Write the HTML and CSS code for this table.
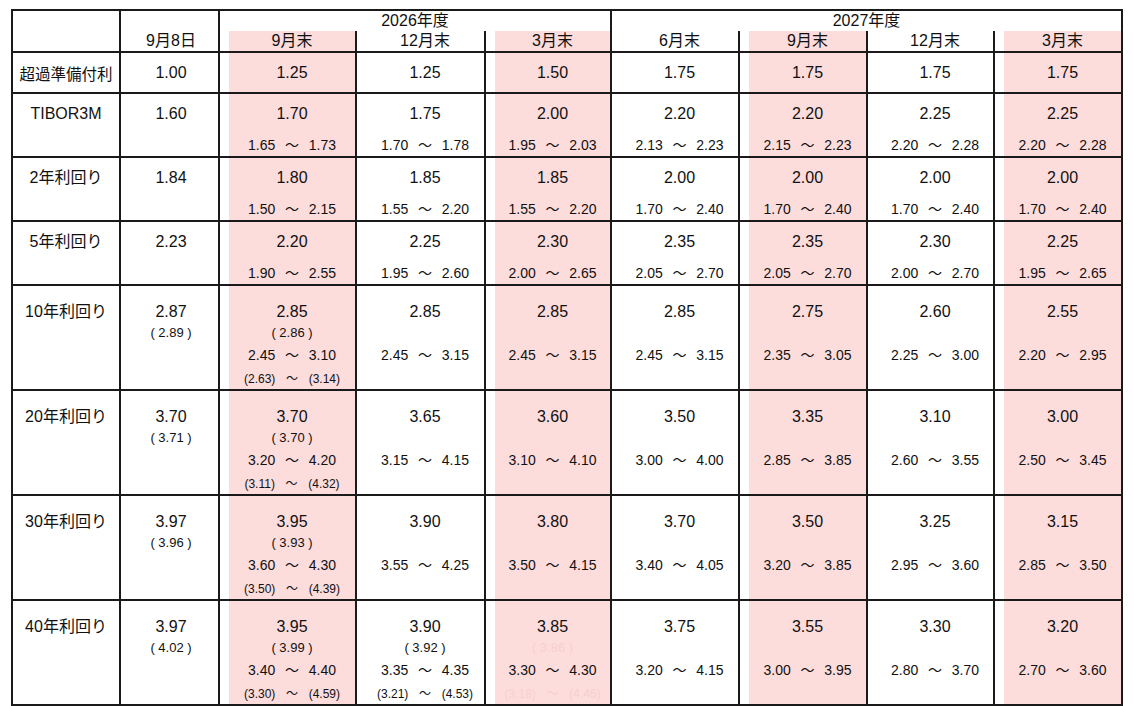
FILE: index.html
```html
<!DOCTYPE html>
<html lang="ja">
<head>
<meta charset="utf-8">
<title>金利見通し</title>
<link rel="stylesheet" href="styles.css">
</head>
<body>
<table class="fx">
  <colgroup>
    <col class="c-lbl"><col class="c-date"><col class="c-w1"><col class="c-w2"><col class="c-w3">
    <col class="c-w4"><col class="c-w4"><col class="c-w5"><col class="c-w4">
  </colgroup>
  <thead>
    <tr class="h1">
      <th rowspan="2" class="lbl"></th>
      <th rowspan="2" class="date">9月8日</th>
      <th colspan="3" class="yr">2026年度</th>
      <th colspan="4" class="yr">2027年度</th>
    </tr>
    <tr class="h2">
      <th class="sub pk">9月末</th>
      <th class="sub">12月末</th>
      <th class="sub pk">3月末</th>
      <th class="sub">6月末</th>
      <th class="sub pk">9月末</th>
      <th class="sub">12月末</th>
      <th class="sub pk">3月末</th>
    </tr>
  </thead>
  <tbody>
    <tr class="r1">
      <td class="lbl">超過準備付利</td>
      <td class="date"><div class="v">1.00</div></td>
      <td class="pk"><div class="v">1.25</div></td>
      <td><div class="v">1.25</div></td>
      <td class="pk"><div class="v">1.50</div></td>
      <td><div class="v">1.75</div></td>
      <td class="pk"><div class="v">1.75</div></td>
      <td><div class="v">1.75</div></td>
      <td class="pk"><div class="v">1.75</div></td>
    </tr>
    <tr class="s">
      <td class="lbl"><div class="v">TIBOR3M</div></td>
      <td class="date"><div class="v">1.60</div></td>
      <td class="pk"><div class="v">1.70</div><div class="r">1.65  ～  1.73</div></td>
      <td><div class="v">1.75</div><div class="r">1.70  ～  1.78</div></td>
      <td class="pk"><div class="v">2.00</div><div class="r">1.95  ～  2.03</div></td>
      <td><div class="v">2.20</div><div class="r">2.13  ～  2.23</div></td>
      <td class="pk"><div class="v">2.20</div><div class="r">2.15  ～  2.23</div></td>
      <td><div class="v">2.25</div><div class="r">2.20  ～  2.28</div></td>
      <td class="pk"><div class="v">2.25</div><div class="r">2.20  ～  2.28</div></td>
    </tr>
    <tr class="s">
      <td class="lbl"><div class="v">2年利回り</div></td>
      <td class="date"><div class="v">1.84</div></td>
      <td class="pk"><div class="v">1.80</div><div class="r">1.50  ～  2.15</div></td>
      <td><div class="v">1.85</div><div class="r">1.55  ～  2.20</div></td>
      <td class="pk"><div class="v">1.85</div><div class="r">1.55  ～  2.20</div></td>
      <td><div class="v">2.00</div><div class="r">1.70  ～  2.40</div></td>
      <td class="pk"><div class="v">2.00</div><div class="r">1.70  ～  2.40</div></td>
      <td><div class="v">2.00</div><div class="r">1.70  ～  2.40</div></td>
      <td class="pk"><div class="v">2.00</div><div class="r">1.70  ～  2.40</div></td>
    </tr>
    <tr class="s">
      <td class="lbl"><div class="v">5年利回り</div></td>
      <td class="date"><div class="v">2.23</div></td>
      <td class="pk"><div class="v">2.20</div><div class="r">1.90  ～  2.55</div></td>
      <td><div class="v">2.25</div><div class="r">1.95  ～  2.60</div></td>
      <td class="pk"><div class="v">2.30</div><div class="r">2.00  ～  2.65</div></td>
      <td><div class="v">2.35</div><div class="r">2.05  ～  2.70</div></td>
      <td class="pk"><div class="v">2.35</div><div class="r">2.05  ～  2.70</div></td>
      <td><div class="v">2.30</div><div class="r">2.00  ～  2.70</div></td>
      <td class="pk"><div class="v">2.25</div><div class="r">1.95  ～  2.65</div></td>
    </tr>
    <tr class="t">
      <td class="lbl"><div class="v">10年利回り</div></td>
      <td class="date"><div class="v">2.87</div><div class="p">( 2.89 )</div></td>
      <td class="pk"><div class="v">2.85</div><div class="p">( 2.86 )</div><div class="r">2.45  ～  3.10</div><div class="pr">(2.63)  ～  (3.14)</div></td>
      <td><div class="v">2.85</div><div class="p"></div><div class="r">2.45  ～  3.15</div></td>
      <td class="pk"><div class="v">2.85</div><div class="p"></div><div class="r">2.45  ～  3.15</div></td>
      <td><div class="v">2.85</div><div class="p"></div><div class="r">2.45  ～  3.15</div></td>
      <td class="pk"><div class="v">2.75</div><div class="p"></div><div class="r">2.35  ～  3.05</div></td>
      <td><div class="v">2.60</div><div class="p"></div><div class="r">2.25  ～  3.00</div></td>
      <td class="pk"><div class="v">2.55</div><div class="p"></div><div class="r">2.20  ～  2.95</div></td>
    </tr>
    <tr class="t">
      <td class="lbl"><div class="v">20年利回り</div></td>
      <td class="date"><div class="v">3.70</div><div class="p">( 3.71 )</div></td>
      <td class="pk"><div class="v">3.70</div><div class="p">( 3.70 )</div><div class="r">3.20  ～  4.20</div><div class="pr">(3.11)  ～  (4.32)</div></td>
      <td><div class="v">3.65</div><div class="p"></div><div class="r">3.15  ～  4.15</div></td>
      <td class="pk"><div class="v">3.60</div><div class="p"></div><div class="r">3.10  ～  4.10</div></td>
      <td><div class="v">3.50</div><div class="p"></div><div class="r">3.00  ～  4.00</div></td>
      <td class="pk"><div class="v">3.35</div><div class="p"></div><div class="r">2.85  ～  3.85</div></td>
      <td><div class="v">3.10</div><div class="p"></div><div class="r">2.60  ～  3.55</div></td>
      <td class="pk"><div class="v">3.00</div><div class="p"></div><div class="r">2.50  ～  3.45</div></td>
    </tr>
    <tr class="t">
      <td class="lbl"><div class="v">30年利回り</div></td>
      <td class="date"><div class="v">3.97</div><div class="p">( 3.96 )</div></td>
      <td class="pk"><div class="v">3.95</div><div class="p">( 3.93 )</div><div class="r">3.60  ～  4.30</div><div class="pr">(3.50)  ～  (4.39)</div></td>
      <td><div class="v">3.90</div><div class="p"></div><div class="r">3.55  ～  4.25</div></td>
      <td class="pk"><div class="v">3.80</div><div class="p"></div><div class="r">3.50  ～  4.15</div></td>
      <td><div class="v">3.70</div><div class="p"></div><div class="r">3.40  ～  4.05</div></td>
      <td class="pk"><div class="v">3.50</div><div class="p"></div><div class="r">3.20  ～  3.85</div></td>
      <td><div class="v">3.25</div><div class="p"></div><div class="r">2.95  ～  3.60</div></td>
      <td class="pk"><div class="v">3.15</div><div class="p"></div><div class="r">2.85  ～  3.50</div></td>
    </tr>
    <tr class="t last">
      <td class="lbl"><div class="v">40年利回り</div></td>
      <td class="date"><div class="v">3.97</div><div class="p">( 4.02 )</div></td>
      <td class="pk"><div class="v">3.95</div><div class="p">( 3.99 )</div><div class="r">3.40  ～  4.40</div><div class="pr">(3.30)  ～  (4.59)</div></td>
      <td><div class="v">3.90</div><div class="p">( 3.92 )</div><div class="r">3.35  ～  4.35</div><div class="pr">(3.21)  ～  (4.53)</div></td>
      <td class="pk"><div class="v">3.85</div><div class="p faint">( 3.86 )</div><div class="r">3.30  ～  4.30</div><div class="pr faint">(3.18)  ～  (4.46)</div></td>
      <td><div class="v">3.75</div><div class="p"></div><div class="r">3.20  ～  4.15</div></td>
      <td class="pk"><div class="v">3.55</div><div class="p"></div><div class="r">3.00  ～  3.95</div></td>
      <td><div class="v">3.30</div><div class="p"></div><div class="r">2.80  ～  3.70</div></td>
      <td class="pk"><div class="v">3.20</div><div class="p"></div><div class="r">2.70  ～  3.60</div></td>
    </tr>
  </tbody>
</table>
</body>
</html>
```

FILE: styles.css
```css
html, body {
  margin: 0;
  padding: 0;
  background: #fff;
}

body {
  font-family: "Liberation Sans", "Noto Sans CJK JP", sans-serif;
  color: #111;
}

.fx {
  border-collapse: collapse;
  table-layout: fixed;
  width: 1110px;
  margin: 9px 0 0 11px;
}

.c-lbl { width: 108px; }
.c-date { width: 99px; }
.c-w1 { width: 137px; }
.c-w2 { width: 129px; }
.c-w3 { width: 126px; }
.c-w4 { width: 128px; }
.c-w5 { width: 127px; }

.fx th,
.fx td {
  border: 2px solid #1a1a1a;
  padding: 0 0 0 9px;
  text-align: center;
  vertical-align: top;
  font-weight: normal;
  white-space: pre;
}

.fx .lbl {
  padding-left: 0;
  font-size: 15.5px;
}

.fx .date {
  padding-left: 3px;
}

/* header */
.h1 { height: 21px; }
.h2 { height: 21px; }

.fx th {
  font-size: 16px;
  line-height: 20px;
}

.fx th.yr {
  border-bottom: hidden;
  padding-left: 0;
  vertical-align: middle;
}

.fx th.sub {
  border-top: hidden;
  vertical-align: middle;
}

.fx th.date {
  vertical-align: bottom;
  padding-bottom: 0;
}

.pk {
  background: linear-gradient(to right, #fff 0, #fff 9px, #fddcdc 9px, #fddcdc 100%);
}

/* body rows */
.r1 { height: 41px; }
.s { height: 64px; }
.t { height: 105px; }
.t.last { height: 104px; }

.r1 td {
  vertical-align: middle;
}

.s td {
  padding-top: 9px;
}

.t td {
  padding-top: 15px;
}

.v {
  font-size: 16px;
  line-height: 22px;
  height: 22px;
}

.lbl .v {
  font-size: 16px;
}

.p {
  font-size: 13px;
  line-height: 20px;
  height: 20px;
}

.r {
  font-size: 14px;
  line-height: 22px;
  height: 22px;
  word-spacing: 1px;
}

.s .r {
  margin-top: 9px;
}

.t .r {
  margin-top: 1px;
}

.pr {
  font-size: 12px;
  line-height: 20px;
  height: 20px;
  margin-top: 3px;
  word-spacing: 2px;
}

.faint {
  color: #f6d0d0;
}
```
